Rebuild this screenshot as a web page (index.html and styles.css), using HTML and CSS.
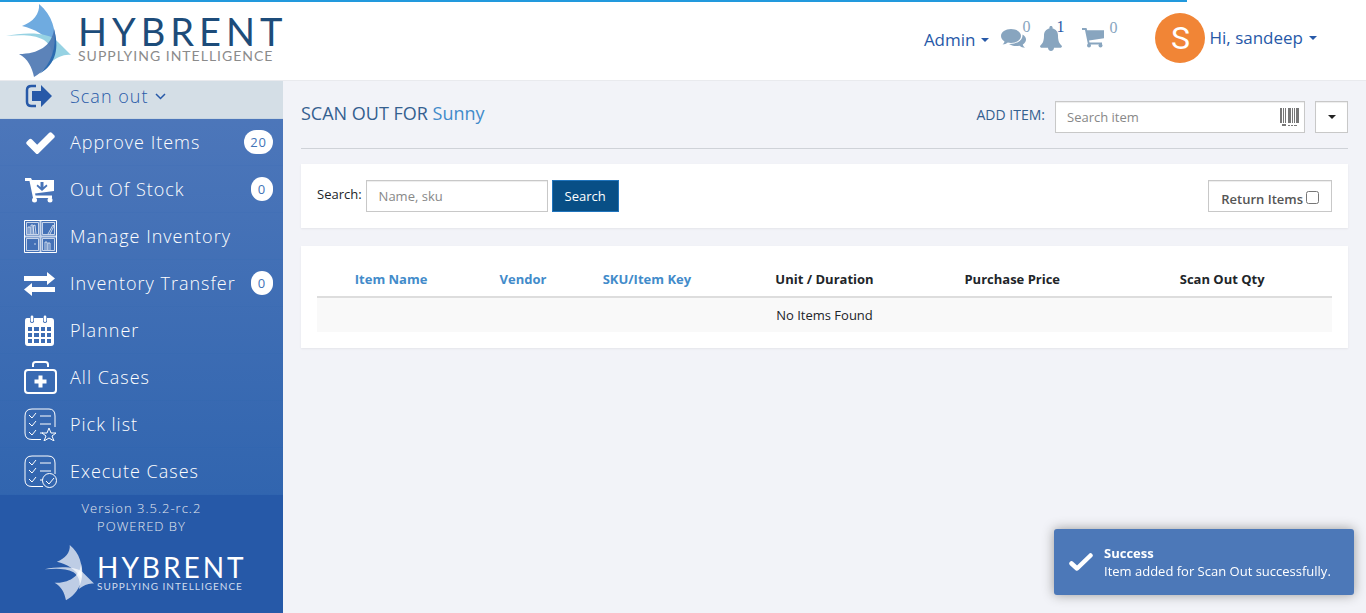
FILE: index.html
```html
<!DOCTYPE html>
<html lang="en">
<head>
<meta charset="utf-8">
<title>Hybrent - Scan Out</title>
<link rel="stylesheet" href="styles.css">
</head>
<body>
<svg class="sprite" aria-hidden="true">
  <symbol id="check" viewBox="0 0 1792 1792"><path d="M1671 566q0 40-28 68l-724 724-136 136q-28 28-68 28t-68-28l-136-136-362-362q-28-28-28-68t28-68l136-136q28-28 68-28t68 28l294 295 656-657q28-28 68-28t68 28l136 136q28 28 28 68z"/></symbol>
  <symbol id="caret" viewBox="0 0 8 4"><path d="M0 0h8L4 4z"/></symbol>
</svg>
<div class="progress"></div>
<header class="header">
  <a class="brand" href="#">
    <svg class="bird" viewBox="0 0 70 76" aria-hidden="true">
      <path fill="#6fabe0" d="M34 1C47 12 52 27 49 45C41 32 30 26 17 23C28 19 35 11 34 1z"/>
      <path fill="#96d2e3" d="M1 33C20 29 45 29 53 39L66 52C59 51 53 54 46 59C49 50 46 42 39 37C28 31 14 32 1 33z"/>
      <path fill="#4a76b1" fill-opacity=".9" d="M14 51C33 51 47 43 49 26C54 45 47 64 29 74C27 64 23 56 14 51z"/>
      <path fill="#2b6bb0" d="M49 26C52 45 46 61 34 71C52 61 54 44 49 26z"/>
    </svg>
    <span class="wordmark"><span class="name">HYBRENT</span><span class="tag">SUPPLYING INTELLIGENCE</span></span>
  </a>
  <nav class="tools">
    <a class="menu low" href="#">Admin <svg class="caret"><use href="#caret"/></svg></a>
    <a class="tool" href="#" aria-label="Messages">
      <svg width="25" height="22" viewBox="0 0 25 22"><path d="M10 1C4.500 1 0 4 0 8c0 2.200 1.300 4 3.500 5.400C3.200 14.800 2.400 15.600 1.500 16.500c2 0 4-.8 5.300-2 1 .3 2 .4 3.200.4 5.500 0 10-3 10-7S15.500 1 10 1z"/><path d="M21.500 6.500C23.700 7.700 25 9.500 25 11.500c0 2-1.300 3.700-3.200 5 .3 1.400 1 2.200 2.200 3.200-2.200 0-4.200-.8-5.500-2-4 .8-8 .1-10.500-1.700 7.500.3 14-3.500 13.500-9.500z"/></svg>
      <span class="count">0</span></a>
    <a class="tool alert" href="#" aria-label="Notifications">
      <svg width="22" height="25" viewBox="0 0 22 25"><path d="M11 0c1 0 1.600.7 1.600 1.600v1c3.400.7 5.400 3.400 5.400 6.900 0 5.500 1.300 8 4 10.500 0 1-.8 1.800-1.800 1.800H14c0 1.800-1.300 3.200-3 3.200s-3-1.400-3-3.200H1.800C.8 21.800 0 21 0 20c2.700-2.500 4-5 4-10.500C4 6 6 3.300 9.400 2.600v-1C9.400.7 10 0 11 0z"/></svg>
      <span class="count">1</span></a>
    <a class="tool cart" href="#" aria-label="Cart">
      <svg width="23" height="20" viewBox="0 0 23 20"><path d="M0 0h4.500l.7 2.300H22v8L7 12.600l.5 1.900H20v2H6L3 2H0z"/><circle cx="7" cy="17.500" r="2"/><circle cx="18.500" cy="17.500" r="2"/></svg>
      <span class="count">0</span></a>
    <a class="menu user" href="#"><span class="avatar">S</span>Hi, sandeep <svg class="caret"><use href="#caret"/></svg></a>
  </nav>
</header>
<div class="layout">
  <aside class="sidebar">
    <nav class="nav">
      <a class="item active" href="#"><svg viewBox="0 0 33 33"><path d="M12 7H7.500Q3 7 3 11v12q0 4 4.500 4H12" fill="none" stroke="currentColor" stroke-width="2.500"/><path d="M8 12h9V6l11 11-11 11v-6H8z"/></svg><span>Scan out</span><svg class="chev" viewBox="0 0 11 7"><path d="M1 1l4.500 4.500L10 1" fill="none" stroke="currentColor" stroke-width="1.500"/></svg></a>
      <a class="item" href="#"><svg viewBox="0 0 1792 1792"><use href="#check"/></svg><span>Approve Items</span><b class="badge">20</b></a>
      <a class="item" href="#"><svg viewBox="0 0 33 33"><path fill-rule="evenodd" d="M1 5h6l1 2h22v11L11 20.500l.5 2H28v2.500H9L5.500 8H1zM16.500 9v5l-3-2.500-1 1.500 5.500 5 5.500-5-1-1.500-3 2.500V9z"/><circle cx="10.500" cy="27" r="2.500"/><circle cx="26" cy="27" r="2.500"/></svg><span>Out Of Stock</span><b class="badge">0</b></a>
      <a class="item" href="#"><svg class="line" viewBox="0 0 33 33"><path d="M.5.500h32v32H.5z"/><g stroke-opacity=".7"><path d="M2.500 2.500h12v12h-12zM18.500 2.500h12v12h-12zM2.500 18.500h12v12h-12zM18.500 18.500h12v12h-12zM4 14V7h2v7M7 14V5h2v9M10 14l-1-8 2-1 1 9M24 14l5-9 1 1-4 8M21 30v-8h2v8M24 30v-7h2v7M10 24h2"/><path stroke-width="2" d="M16.500 1v31M1 16.500h31"/></g></svg><span>Manage Inventory</span></a>
      <a class="item" href="#"><svg viewBox="0 0 33 33"><path d="M0 9h23V5l8 6.500-8 6.500v-4H0zM31 20H8v-4l-8 6.500L8 29v-4h23z"/></svg><span>Inventory Transfer</span><b class="badge">0</b></a>
      <a class="item" href="#"><svg viewBox="0 0 33 33"><path fill-rule="evenodd" d="M3 4h3v4q2 2 4 0V4h9v4q2 2 4 0V4h4q3 0 3 3v22q0 3-3 3H4q-3 0-3-3V7q0-3 2-3zM4 13v4h4v-4zm6 0v4h5v-4zm7 0v4h4v-4zm6 0v4h4v-4zM4 19v4h4v-4zm6 0v4h5v-4zm7 0v4h4v-4zm6 0v4h4v-4zM4 25v4h4v-4zm6 0v4h5v-4zm7 0v4h4v-4zm6 0v4h4v-4z"/><rect x="6.700" y="1.500" width="2.600" height="6.500" rx="1.300"/><rect x="19.700" y="1.500" width="2.600" height="6.500" rx="1.300"/></svg><span>Planner</span></a>
      <a class="item" href="#"><svg viewBox="0 0 33 33"><g fill="none" stroke="currentColor" stroke-width="2"><rect x="1" y="9" width="31" height="23" rx="3"/><path d="M9 6V3.500Q9 1 11.500 1h10Q24 1 24 3.500V6"/></g><path d="M14.500 14.500h4v4h4v4h-4v4h-4v-4h-4v-4h4z"/></svg><span>All Cases</span></a>
      <a class="item" href="#"><svg class="line" viewBox="0 0 33 33"><path d="M17 31.500H8Q1 31.500 1 25V8Q1 1 8 1h17q6 0 6 7v11M5 7l3 3 4-5M5 15l3 3 4-5M5 24l3 3 4-5M16 8h11M16 16h11M16 25h3M25 20l2 5h5l-4 3 2 5-5-3-5 3 2-5-4-3h5z"/></svg><span>Pick list</span></a>
      <a class="item" href="#"><svg class="line" viewBox="0 0 33 33"><path d="M19 31.500H8Q1 31.500 1 25V8Q1 1 8 1h16q7 0 7 7v11M5 7l3 3 4-5M5 15l3 3 4-5M5 24l3 3 4-5M16 8h11M16 16h11M16 25h3M22 26l3 3 5-6"/><circle cx="25.500" cy="25.500" r="7"/></svg><span>Execute Cases</span></a>
    </nav>
    <footer class="footer">
      <p>Version 3.5.2-rc.2</p>
      <p>POWERED BY</p>
      <a class="brand mini" href="#">
        <svg class="bird" viewBox="0 0 70 76" aria-hidden="true">
          <g fill="#fff" fill-opacity=".7"><path d="M34 1C47 12 52 27 49 45C41 32 30 26 17 23C28 19 35 11 34 1z"/>
          <path d="M1 33C20 29 45 29 53 39L66 52C59 51 53 54 46 59C49 50 46 42 39 37C28 31 14 32 1 33z"/>
          <path d="M14 51C33 51 47 43 49 26C54 45 47 64 29 74C27 64 23 56 14 51z"/></g>
        </svg>
        <span class="wordmark"><span class="name">HYBRENT</span><span class="tag">SUPPLYING INTELLIGENCE</span></span>
      </a>
    </footer>
  </aside>
  <main class="main">
    <div class="title-row">
      <h1>SCAN OUT FOR <a href="#">Sunny</a></h1>
      <div class="add">
        <label for="add-item">ADD ITEM:</label>
        <div class="scan-box">
          <input id="add-item" type="text" placeholder="Search item">
          <svg width="19" height="18" viewBox="0 0 19 18" aria-hidden="true"><path d="M0 0h2v15H0zM3 0h1v15H3zM5 0h1v15H5zM8 0h3v15H8zM12 0h1v15h-1zM14 0h1v15h-1zM16 0h3v15h-3zM2 16h4v2H2zM8 17h2v1H8zM11 17h2v1h-2zM14 17h3v1h-3z"/></svg>
        </div>
        <button class="drop" type="button" aria-label="More options"><svg class="caret"><use href="#caret"/></svg></button>
      </div>
    </div>
    <section class="panel filters">
      <form class="search">
        <label for="search">Search:</label>
        <input id="search" type="text" placeholder="Name, sku">
        <button type="button">Search</button>
      </form>
      <label class="returns">Return Items <input type="checkbox"></label>
    </section>
    <section class="panel">
      <table>
        <thead><tr>
          <th class="c-item"><a href="#">Item Name</a></th>
          <th class="c-vendor"><a href="#">Vendor</a></th>
          <th class="c-sku"><a href="#">SKU/Item Key</a></th>
          <th class="c-unit">Unit / Duration</th>
          <th class="c-price">Purchase Price</th>
          <th class="c-qty">Scan Out Qty</th>
        </tr></thead>
        <tbody><tr><td colspan="6">No Items Found</td></tr></tbody>
      </table>
    </section>
  </main>
</div>
<div class="toast" role="status">
  <svg width="24" height="18" viewBox="0 0 24 18" aria-hidden="true"><path d="M2.500 10.500l5.500 5L21.500 2.500" fill="none" stroke="#fff" stroke-width="4.500" stroke-linecap="round" stroke-linejoin="round"/></svg>
  <div><strong>Success</strong><p>Item added for Scan Out successfully.</p></div>
</div>
</body>
</html>
```
FILE: styles.css
```css
* { box-sizing: border-box; }
body {
  margin: 0;
  min-height: 100vh;
  display: flex;
  flex-direction: column;
  background: #f2f3f8;
  color: #212529;
  font: 13px/18px "Open Sans", sans-serif;
}
a { color: #428bca; text-decoration: none; }
p { margin: 0; }
svg { fill: currentColor; flex: none; }
input, button { font: inherit; }
.sprite { position: absolute; width: 0; height: 0; }
.caret { width: 8px; height: 4px; }

.progress {
  position: absolute;
  top: 0;
  left: 0;
  width: 86.9%;
  height: 2px;
  background: #2299dd;
}

.header {
  display: flex;
  justify-content: space-between;
  height: 81px;
  background: #fff;
  border-bottom: 1px solid #e9eaee;
}
.brand { display: flex; padding: 3px 0 0 5px; color: #1d4c7a; }
.bird { width: 70px; height: 76px; }
.wordmark {
  display: flex;
  flex-direction: column;
  font-family: Lato, sans-serif;
  padding: 10px 0 0 3px;
}
.name { font-size: 38px; line-height: 36px; letter-spacing: 5px; }
.tag { font-size: 14px; line-height: 14px; letter-spacing: 1px; color: #8b8b8b; }

.tools { display: flex; align-items: flex-start; padding: 13px 49px 0 0; color: #88a5bf; }
.menu {
  display: flex;
  align-items: center;
  gap: 6px;
  height: 50px;
  font-size: 17px;
  color: #2759a8;
}
.low { height: 54px; margin-right: 12px; }
.tool {
  display: flex;
  align-items: flex-start;
  width: 39px;
  padding-top: 15px;
  color: #88a5bf;
}
.count {
  font: 16px/18px "Liberation Serif", serif;
  margin: -10px 0 0 -4px;
}
.alert { width: 42px; padding-top: 13px; }
.alert .count { color: #2759a8; margin: -8px 0 0 -6px; }
.cart { width: 73px; }
.cart .count { margin: -9px 0 0 4px; }
.avatar {
  width: 50px;
  margin-right: -2px;
  border-radius: 50%;
  background: #f18536;
  color: #fff;
  font: 32px/50px Roboto, sans-serif;
  text-align: center;
}

.layout { display: flex; flex: 1; }
.sidebar {
  display: flex;
  flex-direction: column;
  width: 283px;
  background: #2659a8;
}
.nav { background: linear-gradient(#4f78bb, #3165af); }
.item {
  display: flex;
  align-items: center;
  height: 47px;
  padding: 0 10px 0 24px;
  color: #fff;
  font-size: 18px;
  font-weight: 300;
  letter-spacing: 1px;
  border-bottom: 1px solid #2659a810;
}
.item > svg { width: 33px; height: 33px; margin-right: 13px; }
.item .line { fill: none; stroke: currentColor; }
.active {
  height: 38px;
  padding-bottom: 8px;
  background: #d4dee6;
  color: #2759a8;
}
.item > .chev { width: 11px; height: 7px; margin: 2px 0 0 7px; }
.badge {
  margin-left: auto;
  min-width: 22px;
  padding: 1px 6px 0;
  border-radius: 12px;
  background: #fff;
  color: #4274b8;
  font-size: 13px;
  font-weight: 400;
  line-height: 23px;
  text-align: center;
}
.footer {
  flex: 1;
  padding-top: 4px;
  text-align: center;
  color: #e4e8ef;
  font-weight: 300;
  letter-spacing: 1px;
}
.mini { padding: 9px 0 0 44px; letter-spacing: 0; text-align: left; color: #fff; }
.mini .bird { width: 53px; height: 58px; }
.mini .wordmark { padding: 10px 0 0; }
.mini .name { font-size: 28px; line-height: 26px; font-weight: 400; letter-spacing: 3px; }
.mini .tag { font-size: 10px; line-height: 12px; font-weight: 400; letter-spacing: 1px; color: #d0dcee; }

.main { flex: 1; padding: 20px 18px; }
.title-row {
  display: flex;
  justify-content: space-between;
  height: 48px;
  margin-bottom: 15px;
  border-bottom: 1px solid #cfd2d8;
}
h1 { margin: 0; font-size: 18px; line-height: 24px; font-weight: 400; color: #34608f; }
.add { display: flex; align-items: flex-start; }
.add label { margin-right: 10px; font-size: 14px; line-height: 28px; color: #34608f; }
.scan-box, .search input, .returns, .drop {
  height: 32px;
  border: 1px solid #c8c8c8;
  background: #fff;
  box-shadow: inset 0 1px 1px #00000013;
}
.scan-box { display: flex; align-items: center; width: 250px; padding: 0 5px 0 11px; margin-right: 10px; color: #777; }
.scan-box input { flex: 1; min-width: 0; padding: 0; border: 0; background: none; }
::placeholder { color: #888; opacity: 1; }
.drop { width: 33px; padding: 0; color: #222; }
.drop svg { display: block; margin: auto; }

.panel { background: #fff; padding: 16px; margin-bottom: 18px; box-shadow: 0 1px 2px #0000000f; }
.filters { display: flex; justify-content: space-between; }
.search { display: flex; }
.search label { line-height: 28px; font-weight: 500; margin-right: 4px; }
.search input { width: 182px; padding: 0 12px; margin-right: 4px; }
.search button { width: 67px; height: 32px; padding: 0; border: 1px solid #2074bc; background: #084f86; color: #fff; font-weight: 500; }
.returns { display: flex; align-items: center; gap: 3px; padding: 5px 12px 0; font-weight: 600; color: #555; }
.returns input { width: 13px; height: 13px; margin: 0 0 3px; }

table { width: 100%; border-collapse: collapse; table-layout: fixed; }
th { height: 35px; padding: 0; font-weight: 700; border-bottom: 2px solid #ddd; }
td { height: 35px; padding: 0; text-align: center; background: #f9f9f9; }
.c-item { width: 14.600%; }
.c-vendor { width: 11.400%; }
.c-sku { width: 13%; }
.c-unit { width: 22%; }
.c-price { width: 15%; }
.c-qty { padding-left: 24px; }

.toast {
  position: fixed;
  right: 12px;
  bottom: 18px;
  display: flex;
  align-items: center;
  gap: 11px;
  width: 300px;
  padding: 15px;
  border-radius: 3px;
  background: #4c78b8;
  color: #fff;
  box-shadow: 0 0 12px #999;
}
```
